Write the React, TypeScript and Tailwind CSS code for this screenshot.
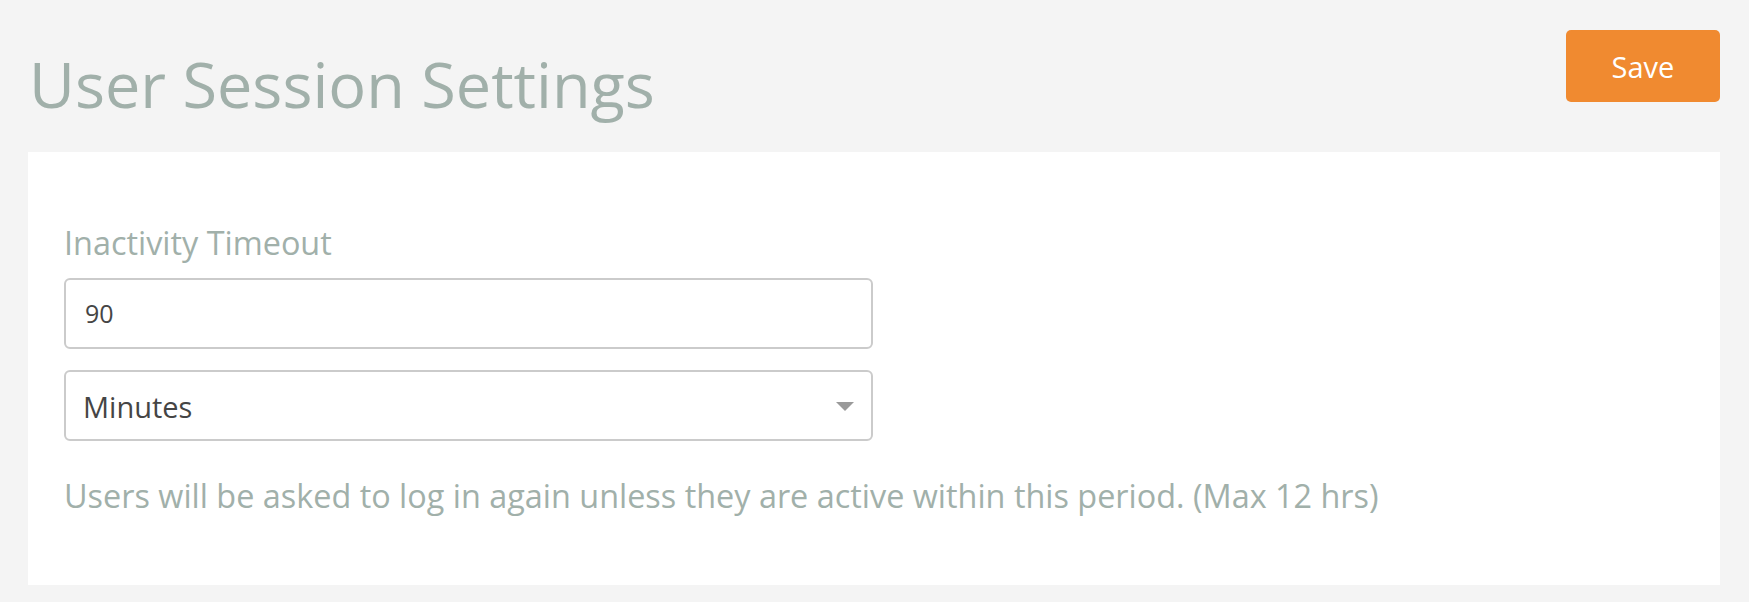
import React from "react";

export default function App() {
  const font = { fontFamily: '"Open Sans", "Noto Sans", sans-serif' };
  return (
    <div className="w-full h-[602px] bg-[#f4f4f4] pl-[28px] pr-[29px]" style={font}>
      <div className="flex justify-between items-start h-[152px]">
        <h1 className="mt-[46px] ml-[1px] text-[63px] leading-[76px] font-normal text-[#a1b0aa]">
          User Session Settings
        </h1>
        <button className="mt-[30px] w-[154px] h-[72px] rounded-[5px] bg-[#f08a30] text-white text-[29px] leading-none">
          Save
        </button>
      </div>
      <div className="bg-white h-[433px] pl-[36px] pt-[70px]">
        <div className="text-[32.4px] leading-[40px] text-[#a1b0aa]">Inactivity Timeout</div>
        <div className="mt-[16px] w-[809px] h-[71px] border-2 border-[#cbcbcb] rounded-[6px] flex items-center pl-[19px] text-[25px] text-[#454545]">
          90
        </div>
        <div className="mt-[21px] w-[809px] h-[71px] border-2 border-[#cbcbcb] rounded-[6px] flex items-center justify-between pl-[17px] pr-[17px] text-[29px] text-[#454545]">
          <span className="mt-[3px]">Minutes</span>
          <svg width="18" height="9" viewBox="0 0 18 9" className="mt-[2px]">
            <polygon points="0,0 18,0 9,9" fill="#9a9a9a" />
          </svg>
        </div>
        <div className="mt-[34px] text-[32.4px] leading-[40px] text-[#a1b0aa]">
          Users will be asked to log in again unless they are active within this period. (Max 12 hrs)
        </div>
      </div>
    </div>
  );
}
